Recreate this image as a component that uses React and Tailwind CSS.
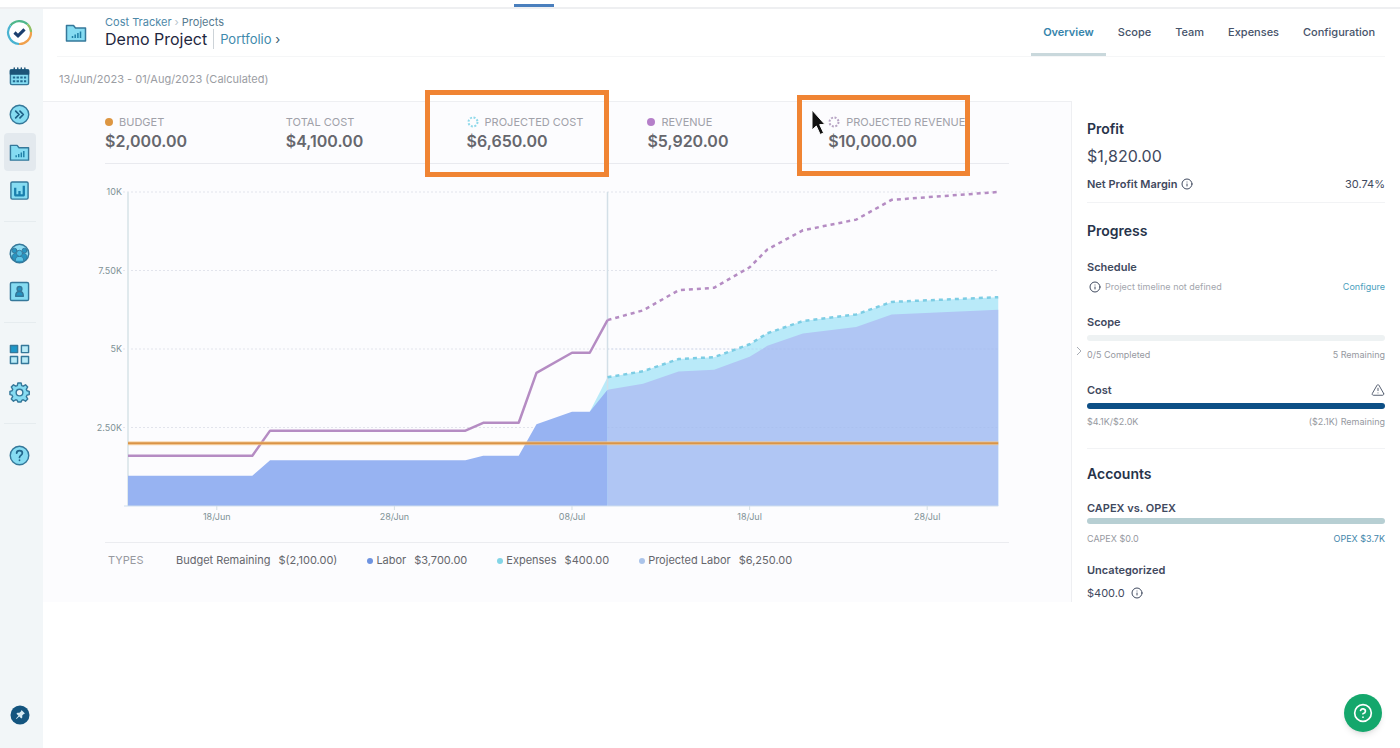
import { clsx } from 'clsx';
import { Info, TriangleAlert, CircleQuestionMark } from 'lucide-react';

// [day since 13/Jun, thousands of dollars]
const revenue = [[0, 1.6], [7, 1.6], [8, 2.4], [19, 2.4], [20, 2.65], [22, 2.65], [23, 4.24], [25, 4.88], [26, 4.88], [27, 5.92]];
const projectedRevenue = [[27, 5.92], [29, 6.23], [31, 6.87], [33, 6.95], [35, 7.6], [36, 8.17], [38, 8.78], [41, 9.12], [43, 9.75], [49, 10]];
const labor = [[0, 0.96], [7, 0.96], [8, 1.46], [19, 1.46], [20, 1.6], [22, 1.6], [23, 2.6], [25, 3], [26, 3], [27, 3.7]];
const projectedCost = [[27, 4.1], [29, 4.29], [31, 4.68], [33, 4.74], [35, 5.15], [36, 5.5], [38, 5.89], [41, 6.1], [43, 6.5], [49, 6.65]];
const projectedLabor = projectedCost.map(([d, v]) => [d, v - 0.4]);

const START = 41;
const BASE = 326;
const END = START + 49 * 17.76;
const px = (day) => START + day * 17.76;
const py = (value) => BASE - value * 31.4;
const toPoints = (list) => list.map(([d, v]) => `${px(d)},${py(v)}`).join(' ');
const toArea = (list) => `${px(list[0][0])},${BASE} ${toPoints(list)} ${px(list[list.length - 1][0])},${BASE}`;

const kpis = [
    { label: 'BUDGET', value: '$2,000.00', dot: 'bg-[#dd9642]' },
    { label: 'TOTAL COST', value: '$4,100.00' },
    { label: 'PROJECTED COST', value: '$6,650.00', ring: 'text-[#8fd9ea]', frame: '-top-3 -left-[42px] h-[87px] w-[184px]' },
    { label: 'REVENUE', value: '$5,920.00', dot: 'bg-[#b57fc9]' },
    { label: 'PROJECTED REVENUE', value: '$10,000.00', ring: 'text-[#b7a4c4]', frame: '-top-[7px] -left-[31px] h-[81px] w-[173px]', cursor: true },
];

const legend = [
    { label: 'Budget Remaining', value: '$(2,100.00)' },
    { label: 'Labor', value: '$3,700.00', dot: 'bg-[#6e93e0]' },
    { label: 'Expenses', value: '$400.00', dot: 'bg-[#83d5e6]' },
    { label: 'Projected Labor', value: '$6,250.00', dot: 'bg-[#abc4ea]' },
];

const tabs = ['Overview', 'Scope', 'Team', 'Expenses', 'Configuration'];

const Icon = ({ children, className = 'size-[21px]' }) => (
    <svg className={className} viewBox="0 0 22 22" fill="#86dcf2" stroke="#35789a" strokeWidth="1.5" strokeLinejoin="round" strokeLinecap="round" aria-hidden="true">
        {children}
    </svg>
);

const FolderIcon = ({ className }) => (
    <Icon className={className}>
        <path d="M1.500 3.500h7l2 2.500h10v13h-19z" />
        <path d="M7.500 16v-2M10.200 16v-3.500M12.900 16v-5M15.500 16V9.500" stroke="#1f7fa6" strokeLinecap="butt" />
    </Icon>
);

const CalendarIcon = () => (
    <Icon>
        <rect x="1.500" y="4" width="19" height="15.500" rx="1.500" />
        <path d="M1.500 4.500h19v4h-19z" fill="#1d5478" stroke="#1d5478" />
        <path d="M5.500 2v3M9.200 2v3M12.900 2v3M16.600 2v3" stroke="#1d5478" />
        <path d="M4 12h14M4 16h14" stroke="#236b91" strokeWidth="2" strokeDasharray="2.500 1.400" strokeLinecap="butt" />
    </Icon>
);

const ForwardIcon = () => (
    <Icon>
        <circle cx="11" cy="11" r="9.700" />
        <path d="M7 7.500l3.500 3.500L7 14.500M11.500 7.500L15 11l-3.500 3.500" fill="none" stroke="#1d5f86" strokeWidth="1.800" />
    </Icon>
);

const ReportIcon = () => (
    <Icon>
        <rect x="2" y="2" width="18" height="18" rx="1.500" />
        <path d="M6.500 16.500V8M11 16.500v-5M15.500 16.500V6M6 16h10" stroke="#1a7fad" strokeWidth="2.400" strokeLinecap="butt" />
    </Icon>
);

const PeopleIcon = () => (
    <Icon>
        <circle cx="11" cy="11" r="9.700" fill="#8fdcf2" />
        <path d="M3 15c.3-3 1.800-4 4-4h8c2.200 0 3.700 1 4 4-1.500 3.500-5 5.500-8 5.500S4.500 18.500 3 15z" fill="#2795c1" strokeWidth="1" />
        <circle cx="5.800" cy="8" r="2.500" fill="#2795c1" strokeWidth="1" />
        <circle cx="16.200" cy="8" r="2.500" fill="#2795c1" strokeWidth="1" />
        <path d="M6.500 18.500c0-3 1.500-4.500 4.500-4.500s4.500 1.500 4.500 4.500" fill="#5cc4e6" strokeWidth="1" />
        <circle cx="11" cy="10.800" r="3.200" fill="#4db9de" strokeWidth="1" />
    </Icon>
);

const ContactIcon = () => (
    <Icon>
        <rect x="1.500" y="1.500" width="19" height="19" rx="1.500" />
        <path d="M7 16c0-3 1.500-5 4-5s4 2 4 5z" fill="#2492bf" />
        <circle cx="11" cy="8.300" r="2.500" fill="#2492bf" />
    </Icon>
);

const GridIcon = () => (
    <Icon>
        <rect x="1.500" y="1.500" width="7.500" height="7.500" fill="#1e97c8" />
        <rect x="13" y="1.500" width="7.500" height="7.500" fill="#b9ebf7" />
        <rect x="1.500" y="13" width="7.500" height="7.500" fill="#b9ebf7" />
        <rect x="13" y="13" width="7.500" height="7.500" fill="#b9ebf7" />
    </Icon>
);

const GearIcon = () => (
    <Icon>
        <path d="M9.300 1h3.400l.6 2.700 1.600.7 2.400-1.500 2.300 2.300-1.500 2.400.7 1.600 2.400.6v3.400l-2.400.6-.7 1.600 1.500 2.400-2.300 2.300-2.400-1.500-1.600.7-.6 1.700H9.300l-.6-1.700-1.600-.7-2.400 1.500-2.300-2.300 1.500-2.400-.7-1.600L1 13.200V9.800l2.200-.6.7-1.600-1.500-2.400 2.300-2.300 2.400 1.500 1.600-.7z" />
        <circle cx="11" cy="11" r="3.500" fill="#f1f6f8" />
    </Icon>
);

const HelpIcon = () => (
    <Icon>
        <circle cx="11" cy="11" r="9.700" />
        <path d="M8 8.500c.2-3.500 6-3.300 6 0 0 2.300-3 2.300-3 4.500M11 15.800v.3" fill="none" stroke="#22678c" strokeWidth="1.800" />
    </Icon>
);

const navGroups = [
    [['Calendar', CalendarIcon], ['Workflows', ForwardIcon], ['Projects', FolderIcon], ['Reports', ReportIcon]],
    [['Teams', PeopleIcon], ['Contacts', ContactIcon]],
    [['Apps', GridIcon], ['Settings', GearIcon]],
    [['Help', HelpIcon]],
];

const Sidebar = () => (
    <nav aria-label="Main" className="flex w-[43px] shrink-0 flex-col items-center bg-[#f2f6f8] pr-1 pb-[14px]">
        <a href="#home" aria-label="Home" className="mb-0.5 flex h-[46px] items-center">
            <svg className="size-[27px]" viewBox="0 0 27 27" fill="none" strokeWidth="2.200">
                <circle cx="13.500" cy="13.500" r="11.500" fill="#fff" />
                <path d="M4.500 6.500A11.500 11.500 0 0 1 21.500 5.300" stroke="#4fb78b" />
                <path d="M21.500 5.300A11.500 11.500 0 0 1 25 13" stroke="#8fbf63" />
                <path d="M25 13A11.500 11.500 0 0 1 13 25" stroke="#f0a04c" />
                <path d="M13 25A11.500 11.500 0 0 1 4.500 6.500" stroke="#49b3d1" />
                <path d="M8.500 13.500l3.500 3.300 6.500-6.500" stroke="#1c3f6e" strokeWidth="3.200" />
            </svg>
        </a>
        {navGroups.map((group, i) => (
            <div key={i} className="flex flex-col items-center">
                {i > 0 && <div className="my-3 h-px w-8 bg-[#e6ecef]" />}
                {group.map(([name, Glyph]) => (
                    <a
                        key={name}
                        href={`#${name.toLowerCase()}`}
                        aria-label={name}
                        className={clsx('flex h-[38px] w-8 items-center justify-center rounded-sm', name === 'Projects' && 'bg-[#e3e9ee]')}
                    >
                        <Glyph />
                    </a>
                ))}
            </div>
        ))}
        <button aria-label="Pin menu" className="mt-auto flex h-[38px] items-center">
            <svg className="size-5" viewBox="0 0 20 20">
                <circle cx="10" cy="10" r="9.500" fill="#14557f" />
                <path d="M11.500 5l3.500 3.500-1.200.4-1.600 1.700.1 2-1 1-2.100-2.100L6.500 14l-.5-.5 2.500-2.700-2.100-2.100 1-1 2 .1 1.700-1.600z" fill="#d5eaf3" />
            </svg>
        </button>
    </nav>
);

const Header = () => (
    <header className="mr-[15px] ml-[14px] flex h-12 items-center justify-between border-b border-[#f5f6f7]">
        <div className="flex items-center">
            <span className="ml-2 w-10">
                <FolderIcon className="size-[22px]" />
            </span>
            <div className="pb-0.5">
                <nav aria-label="Breadcrumb" className="flex items-center gap-[3px] text-[11px] leading-[14px] text-[#4d88a8]">
                    <a href="#cost-tracker">Cost Tracker</a>
                    <span className="text-[#b9c4cc]">›</span>
                    <a href="#projects" className="text-[#567a8f]">Projects</a>
                </nav>
                <div className="flex items-center">
                    <h1 className="border-r border-[#cdd3d8] pr-1.5 text-base leading-5 text-[#1f2740]">Demo Project</h1>
                    <a href="#portfolio" className="pl-1.5 text-[13px] leading-5 text-[#3f8bad]">
                        Portfolio <span className="text-[#3c5a6e]">›</span>
                    </a>
                </div>
            </div>
        </div>
        <nav aria-label="Project sections" className="-mr-0.5 flex h-full">
            {tabs.map((tab) => (
                <a
                    key={tab}
                    href={`#${tab.toLowerCase()}`}
                    className={clsx(
                        'flex items-center border-b-[3px] px-3 pt-0.5 text-[11px] font-medium',
                        tab === 'Overview' ? 'border-[#c9d8dc] font-semibold text-[#3584ab]' : 'border-transparent text-[#46536a]'
                    )}
                >
                    {tab}
                </a>
            ))}
        </nav>
    </header>
);

const Chart = () => (
    <svg className="mt-4 w-full" viewBox="0 0 922 349" role="img" aria-label="Budget, cost and revenue over time">
        {[[10, '10K'], [7.5, '7.50K'], [5, '5K'], [2.5, '2.50K']].map(([v, label]) => (
            <g key={label}>
                <line x1={START - 5} x2={END} y1={py(v)} y2={py(v)} stroke="#e2e4ec" strokeDasharray="2 2" />
                <text x="35" y={py(v) + 3} textAnchor="end" fontSize="9" fill="#7f9296">{label}</text>
            </g>
        ))}
        <line x1={START} x2={START} y1={py(10)} y2={BASE} stroke="#e0e9ed" strokeWidth="2" />
        <polygon points={`${px(26)},${py(3)} ${toPoints(projectedCost)} ${END},${BASE} ${px(27)},${BASE}`} fill="#b9eaf9" />
        <polygon points={toArea(labor)} fill="#97b3f2" />
        <polygon points={toArea(projectedLabor)} fill="#b0c6f4" />
        {[2.5, 5].map((v) => (
            <line key={v} x1={px(27)} x2={END} y1={py(v)} y2={py(v)} stroke="#a3b8e6" strokeOpacity="0.35" strokeDasharray="2 2" />
        ))}
        <line x1={px(27)} x2={px(27)} y1={py(10)} y2={py(3.7)} stroke="#d3dfe7" strokeWidth="1.500" />
        <polyline points={toPoints(projectedCost)} fill="none" stroke="#7dcde4" strokeWidth="2.500" strokeDasharray="4 4" />
        <polyline points={toPoints(revenue)} fill="none" stroke="#b58cc3" strokeWidth="2.500" strokeLinejoin="round" />
        <polyline points={toPoints(projectedRevenue)} fill="none" stroke="#b58cc3" strokeWidth="2.500" strokeDasharray="4 4" />
        <line x1={START} x2={END} y1={py(2)} y2={py(2)} stroke="#f6c98c" strokeOpacity="0.7" strokeWidth="4" />
        <line x1={START} x2={END} y1={py(2)} y2={py(2)} stroke="#da9447" strokeWidth="2" />
        <line x1={START - 4} x2={END} y1={BASE} y2={BASE} stroke="#cfdeed" />
        {[[5, '18/Jun'], [15, '28/Jun'], [25, '08/Jul'], [35, '18/Jul'], [45, '28/Jul']].map(([d, label]) => (
            <g key={label}>
                <line x1={px(d)} x2={px(d)} y1={BASE} y2={BASE + 4} stroke="#d5dfe4" />
                <text x={px(d)} y="340" textAnchor="middle" fontSize="9" fill="#7f9296">{label}</text>
            </g>
        ))}
    </svg>
);

const Kpi = ({ label, value, dot, ring, frame, cursor }) => (
    <div className="relative pt-[11px]">
        <div className="flex h-[18px] items-center gap-1.5 text-[11px] whitespace-nowrap text-[#a0a1a9]">
            {dot && <span className={clsx('size-2 rounded-full', dot)} />}
            {ring && (
                <svg className={clsx('size-3', ring)} viewBox="0 0 12 12" fill="none" stroke="currentColor" strokeWidth="2">
                    <circle cx="6" cy="6" r="4.500" strokeDasharray="2 1.530" />
                </svg>
            )}
            {label}
        </div>
        <div className="text-base leading-5 font-semibold text-[#66676d]">{value}</div>
        {frame && <div className={clsx('pointer-events-none absolute border-5 border-[#f08433]', frame)} />}
        {cursor && (
            <svg className="absolute top-1.5 -left-[18px] h-[30px] w-[18px]" viewBox="0 0 18 30">
                <path d="M2 2v20l4.300-4 3.900 8.500 3.400-1.600-3.900-8.300H15z" fill="#111" stroke="#fff" strokeWidth="1" />
            </svg>
        )}
    </div>
);

const ChartPanel = () => (
    <section className="min-w-0 flex-1 border-t border-r border-[#eeeff2] bg-[#fcfcfe] pr-[62px] pb-6 pl-11">
        <div className="ml-[18px] grid h-[62px] grid-cols-5 border-b border-[#e9eaef]">
            {kpis.map((kpi) => (
                <Kpi key={kpi.label} {...kpi} />
            ))}
        </div>
        <Chart />
        <div className="mt-[13px] ml-[18px] flex h-9 items-center border-t border-[#ebecf0] pl-[3px] text-[11px] whitespace-nowrap text-[#65666c]">
            <span className="w-[68px] text-[#97999f]">TYPES</span>
            <ul className="flex gap-[30px]">
                {legend.map(({ label, value, dot }) => (
                    <li key={label} className="flex items-center gap-2">
                        <span className="flex items-center gap-[3px]">
                            {dot && <span className={clsx('size-1.5 rounded-full', dot)} />}
                            {label}
                        </span>
                        <span>{value}</span>
                    </li>
                ))}
            </ul>
        </div>
    </section>
);

const Row = ({ className, children }) => (
    <div className={clsx('flex h-5 items-center justify-between', className)}>{children}</div>
);

const Bar = ({ className }) => <div className={clsx('h-1.5 rounded-full', className)} />;

const SummaryPanel = () => (
    <aside className="relative w-[328px] shrink-0 pt-[18px] pr-[15px] pl-[15px] text-[11px] text-[#3f495e]">
        <button aria-label="Collapse summary" className="absolute top-[245px] left-1 text-[#a9adb5]">
            <svg className="h-2.5 w-1.5" viewBox="0 0 6 10" fill="none" stroke="currentColor">
                <path d="M1 1l4 4-4 4" />
            </svg>
        </button>

        <section className="border-b border-[#f2f3f5] pb-2">
            <h2 className="text-sm leading-5 font-semibold text-[#27334a]">Profit</h2>
            <p className="mt-[7px] text-base leading-5">$1,820.00</p>
            <Row className="mt-2">
                <h3 className="flex items-center gap-1 font-semibold">Net Profit Margin <Info className="size-3" /></h3>
                <span>30.74%</span>
            </Row>
        </section>

        <section className="border-b border-[#f2f3f5] pt-[18px] pb-4">
            <h2 className="text-sm leading-5 font-semibold text-[#27334a]">Progress</h2>
            <Row className="mt-4">
                <h3 className="font-semibold">Schedule</h3>
            </Row>
            <Row className="text-[9px] text-[#a3a6ad]">
                <span className="flex items-center gap-1 pl-0.5"><Info className="size-3 text-[#3f495e]" /> Project timeline not defined</span>
                <a href="#configure" className="text-[#4aa0bd]">Configure</a>
            </Row>

            <Row className="mt-[15px]">
                <h3 className="font-semibold">Scope</h3>
            </Row>
            <Bar className="mt-[3px] bg-[#eef2f3]" />
            <Row className="mt-1 text-[9px] text-[#96999f]">
                <span>0/5 Completed</span>
                <span>5 Remaining</span>
            </Row>

            <Row className="mt-[15px]">
                <h3 className="font-semibold">Cost</h3>
                <TriangleAlert className="size-3.5" strokeWidth={1.5} />
            </Row>
            <Bar className="mt-[3px] bg-[#0d4f86]" />
            <Row className="mt-[3px] text-[9px] text-[#96999f]">
                <span>$4.1K/$2.0K</span>
                <span>($2.1K) Remaining</span>
            </Row>
        </section>

        <section className="pt-[15px]">
            <h2 className="text-sm leading-5 font-semibold text-[#27334a]">Accounts</h2>
            <Row className="mt-[14px]">
                <h3 className="font-semibold">CAPEX vs. OPEX</h3>
            </Row>
            <Bar className="bg-[#b7cfd3]" />
            <Row className="mt-[5px] text-[9px] text-[#96999f]">
                <span>CAPEX $0.0</span>
                <a href="#opex" className="text-[#3f86aa]">OPEX $3.7K</a>
            </Row>
            <Row className="mt-[11px]">
                <h3 className="font-semibold">Uncategorized</h3>
            </Row>
            <p className="mt-[3px] flex h-5 items-center gap-1.5">$400.0 <Info className="size-3" /></p>
        </section>
    </aside>
);

export default function App() {
    return (
        <div className="flex min-h-screen flex-col bg-white font-['Inter',sans-serif]">
            <div className="flex h-[9px] items-end border-b-2 border-[#eeeff1]">
                <div className="ml-[514px] h-[3px] w-10 bg-[#4a7fbd]" />
            </div>
            <div className="flex flex-1">
                <Sidebar />
                <main className="min-w-0 flex-1">
                    <Header />
                    <p className="flex h-11 items-center pl-4 text-[11px] text-[#9b9da3]">13/Jun/2023 - 01/Aug/2023 (Calculated)</p>
                    <div className="flex items-start">
                        <ChartPanel />
                        <SummaryPanel />
                    </div>
                </main>
            </div>
            <button aria-label="Help" className="fixed right-[18px] bottom-4 flex size-[38px] items-center justify-center rounded-full bg-[#14a76c] text-white shadow-md">
                <CircleQuestionMark className="size-5" />
            </button>
        </div>
    );
}
